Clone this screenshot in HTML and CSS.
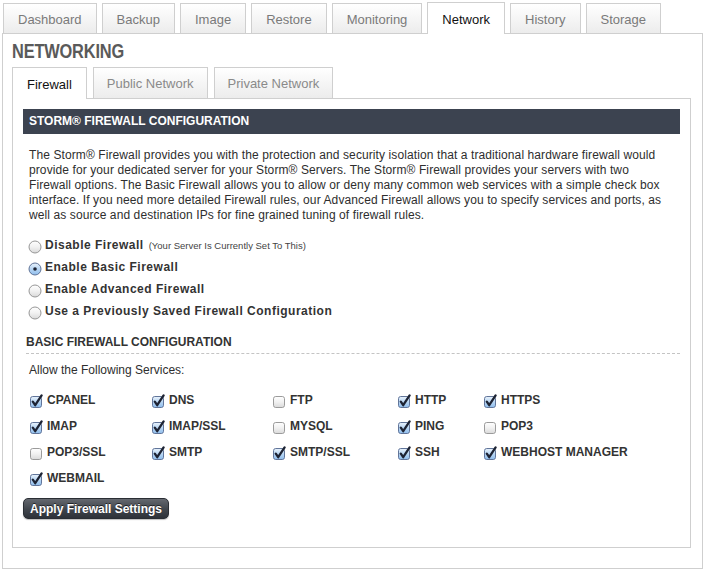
FILE: index.html
```html
<!DOCTYPE html>
<html lang="en">
<head>
<meta charset="utf-8">
<title>Network</title>
<link rel="stylesheet" href="styles.css">
</head>
<body>
<svg class="defs" aria-hidden="true">
  <defs>
    <linearGradient id="gBlue" x1="0" y1="0" x2="0" y2="1">
      <stop offset="0" stop-color="#eaf3fc"/>
      <stop offset="0.45" stop-color="#bcd8f4"/>
      <stop offset="1" stop-color="#8fbdec"/>
    </linearGradient>
    <linearGradient id="gGray" x1="0" y1="0" x2="0" y2="1">
      <stop offset="0" stop-color="#ffffff"/>
      <stop offset="0.5" stop-color="#f1f1f1"/>
      <stop offset="1" stop-color="#d9d9d9"/>
    </linearGradient>
    <symbol id="cb-on" viewBox="0 0 14 14">
      <rect x="1.5" y="2.5" width="11" height="11" rx="2.2" fill="url(#gBlue)" stroke="#61759a"/>
      <path d="M3.8 7.6 L6.2 11.2 L12.6 1.4" fill="none" stroke="#1d2333" stroke-width="2.3" stroke-linecap="round" stroke-linejoin="round"/>
    </symbol>
    <symbol id="cb-off" viewBox="0 0 14 14">
      <rect x="1.5" y="2.5" width="11" height="11" rx="2.2" fill="url(#gGray)" stroke="#9b9b9b"/>
    </symbol>
    <symbol id="rb-on" viewBox="0 0 14 14">
      <circle cx="7" cy="7" r="6" fill="url(#gBlue)" stroke="#5f7397"/>
      <circle cx="7" cy="7" r="1.8" fill="#1d2333"/>
    </symbol>
    <symbol id="rb-off" viewBox="0 0 14 14">
      <circle cx="7" cy="7" r="6" fill="url(#gGray)" stroke="#979797"/>
    </symbol>
  </defs>
</svg>

<div class="wrap">
  <nav class="tabs">
    <span class="tab">Dashboard</span>
    <span class="tab">Backup</span>
    <span class="tab">Image</span>
    <span class="tab">Restore</span>
    <span class="tab">Monitoring</span>
    <span class="tab active">Network</span>
    <span class="tab">History</span>
    <span class="tab">Storage</span>
  </nav>

  <div class="panel">
    <h1 class="title"><span class="title-text">NETWORKING</span></h1>

    <nav class="subtabs">
      <span class="subtab active">Firewall</span>
      <span class="subtab">Public Network</span>
      <span class="subtab">Private Network</span>
    </nav>

    <div class="box">
      <div class="bar">STORM® FIREWALL CONFIGURATION</div>

      <p class="intro">The Storm® Firewall provides you with the protection and security isolation that a traditional hardware firewall would<br>provide for your dedicated server for your Storm® Servers. The Storm® Firewall provides your servers with two<br>Firewall options. The Basic Firewall allows you to allow or deny many common web services with a simple check box<br>interface. If you need more detailed Firewall rules, our Advanced Firewall allows you to specify services and ports, as<br>well as source and destination IPs for fine grained tuning of firewall rules.</p>

      <div class="radios">
        <div class="radio"><svg class="rb"><use href="#rb-off"/></svg><span class="rlabel">Disable Firewall</span><span class="note">(Your Server Is Currently Set To This)</span></div>
        <div class="radio"><svg class="rb"><use href="#rb-on"/></svg><span class="rlabel">Enable Basic Firewall</span></div>
        <div class="radio"><svg class="rb"><use href="#rb-off"/></svg><span class="rlabel">Enable Advanced Firewall</span></div>
        <div class="radio"><svg class="rb"><use href="#rb-off"/></svg><span class="rlabel">Use a Previously Saved Firewall Configuration</span></div>
      </div>

      <h2 class="section">BASIC FIREWALL CONFIGURATION</h2>

      <p class="allow">Allow the Following Services:</p>

      <div class="services">
        <div class="svc"><svg class="cb"><use href="#cb-on"/></svg>CPANEL</div>
        <div class="svc"><svg class="cb"><use href="#cb-on"/></svg>DNS</div>
        <div class="svc"><svg class="cb"><use href="#cb-off"/></svg>FTP</div>
        <div class="svc"><svg class="cb"><use href="#cb-on"/></svg>HTTP</div>
        <div class="svc"><svg class="cb"><use href="#cb-on"/></svg>HTTPS</div>

        <div class="svc"><svg class="cb"><use href="#cb-on"/></svg>IMAP</div>
        <div class="svc"><svg class="cb"><use href="#cb-on"/></svg>IMAP/SSL</div>
        <div class="svc"><svg class="cb"><use href="#cb-off"/></svg>MYSQL</div>
        <div class="svc"><svg class="cb"><use href="#cb-on"/></svg>PING</div>
        <div class="svc"><svg class="cb"><use href="#cb-off"/></svg>POP3</div>

        <div class="svc"><svg class="cb"><use href="#cb-off"/></svg>POP3/SSL</div>
        <div class="svc"><svg class="cb"><use href="#cb-on"/></svg>SMTP</div>
        <div class="svc"><svg class="cb"><use href="#cb-on"/></svg>SMTP/SSL</div>
        <div class="svc"><svg class="cb"><use href="#cb-on"/></svg>SSH</div>
        <div class="svc"><svg class="cb"><use href="#cb-on"/></svg>WEBHOST MANAGER</div>

        <div class="svc"><svg class="cb"><use href="#cb-on"/></svg>WEBMAIL</div>
      </div>

      <button class="apply" type="button">Apply Firewall Settings</button>
    </div>
  </div>
</div>
</body>
</html>
```

FILE: styles.css
```css
* {
  box-sizing: border-box;
}

body {
  margin: 0;
  background: #fff;
  color: #333;
  font-family: "Liberation Sans", Arial, sans-serif;
}

.defs {
  position: absolute;
  width: 0;
  height: 0;
  overflow: hidden;
}

.wrap {
  width: 701px;
  margin-left: 2px;
}

/* top tabs */
.tabs {
  display: flex;
  align-items: flex-end;
  gap: 5px;
  height: 33px;
  padding-left: 1px;
}

.tab {
  display: flex;
  align-items: center;
  height: 30px;
  padding: 1px 14px 0;
  border: 1px solid #cfcfcf;
  border-bottom: 0;
  background: linear-gradient(#ffffff, #ececec);
  color: #7a7a7a;
  font-size: 13px;
}

.tab.active {
  position: relative;
  z-index: 1;
  height: 32px;
  margin-bottom: -1px;
  background: #fff;
  color: #111;
}

/* outer panel */
.panel {
  border: 1px solid #cfcfcf;
  padding: 0 11px 20px 9px;
}

.title {
  margin: 7px 0 6px;
  font-size: 19.5px;
  line-height: 20px;
  font-weight: bold;
  color: #5a5a5a;
}

.title-text {
  display: inline-block;
  transform: scaleX(0.84);
  transform-origin: left center;
  letter-spacing: -0.2px;
}

/* sub tabs */
.subtabs {
  display: flex;
  align-items: flex-end;
  gap: 6px;
  height: 31px;
}

.subtab {
  display: flex;
  align-items: center;
  height: 31px;
  padding: 1px 13px 0;
  border: 1px solid #cfcfcf;
  border-bottom: 0;
  background: linear-gradient(#ffffff, #ececec);
  color: #8a8a8a;
  font-size: 13px;
}

.subtab.active {
  position: relative;
  z-index: 1;
  height: 32px;
  margin-bottom: -1px;
  padding: 1px 14px 0;
  background: #fff;
  color: #111;
}

/* inner box */
.box {
  border: 1px solid #cfcfcf;
  padding: 10px 10px 28px;
}

.bar {
  height: 25px;
  padding-left: 6px;
  background: #3c4350;
  color: #fff;
  font-size: 12px;
  font-weight: bold;
  line-height: 25px;
}

.intro {
  margin: 14px 0 0 6px;
  font-size: 12px;
  line-height: 15px;
  letter-spacing: 0.1px;
  color: #2e2e2e;
}

.radios {
  margin-top: 11px;
}

.radio {
  display: flex;
  align-items: center;
  height: 22px;
  padding-left: 5px;
}

.rb {
  width: 14px;
  height: 14px;
  margin: 3px 3px 0 0;
  flex: none;
}

.rlabel {
  font-size: 12px;
  font-weight: bold;
  letter-spacing: 0.5px;
  color: #333;
}

.note {
  margin-left: 5px;
  font-size: 9.5px;
  color: #444;
}

.section {
  margin: 12px 0 0 3px;
  padding-bottom: 3px;
  border-bottom: 1px dashed #c4c4c4;
  font-size: 12px;
  line-height: 16px;
  font-weight: bold;
  color: #333;
}

.allow {
  margin: 9px 0 0 6px;
  font-size: 12px;
  line-height: 15px;
  color: #2e2e2e;
}

.services {
  display: grid;
  grid-template-columns: 122px 121px 125px 86px auto;
  grid-auto-rows: 26px;
  margin-top: 9px;
  padding-left: 6px;
}

.svc {
  display: flex;
  align-items: center;
  gap: 4px;
  font-size: 12px;
  font-weight: bold;
  color: #333;
  white-space: nowrap;
}

.cb {
  width: 14px;
  height: 14px;
  margin-top: 2px;
  flex: none;
}

.apply {
  display: block;
  height: 21px;
  margin-top: 7px;
  padding: 0 6px;
  border: 1px solid #2a2e34;
  border-radius: 5px;
  background: linear-gradient(#64686f, #40454c 55%, #2e3239);
  box-shadow: 0 1px 1px rgba(0, 0, 0, 0.25);
  color: #fff;
  font-family: "Liberation Sans", Arial, sans-serif;
  font-size: 12px;
  font-weight: bold;
  text-shadow: 0 -1px 0 rgba(0, 0, 0, 0.6);
}
```
